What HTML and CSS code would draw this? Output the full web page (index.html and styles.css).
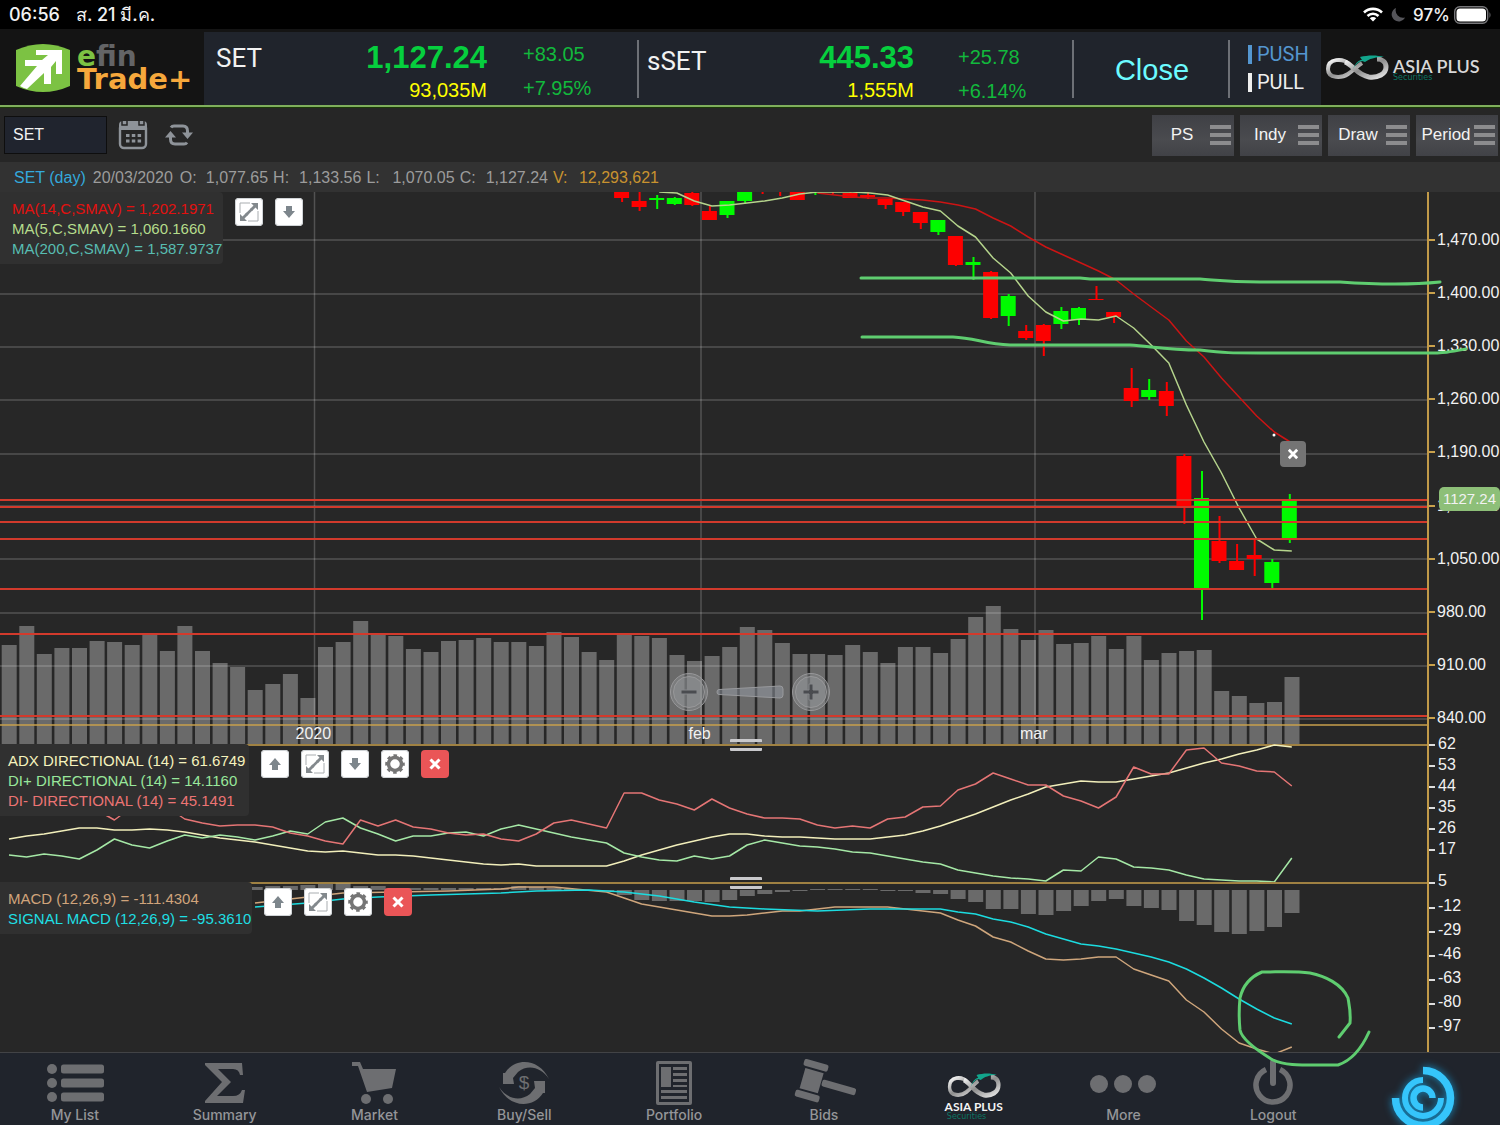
FILE: index.html
```html
<!DOCTYPE html>
<html lang="th">
<head>
<meta charset="utf-8">
<meta name="viewport" content="width=device-width, initial-scale=1">
<title>efin Trade+</title>
<link rel="stylesheet" href="styles.css">
</head>
<body>
<svg class="defs" aria-hidden="true">
  <defs>
    <linearGradient id="silver" x1="0" y1="0" x2="1" y2="1">
      <stop offset="0" stop-color="#fff"/><stop offset=".5" stop-color="#8d8d8d"/><stop offset="1" stop-color="#e8e8e8"/>
    </linearGradient>
    <symbol id="i-up" viewBox="0 0 28 28"><path fill="#7d868c" d="M14 8l6 7h-3v5h-6v-5H8z"/></symbol>
    <symbol id="i-down" viewBox="0 0 28 28"><path fill="#7d868c" d="M14 20l6-7h-3V8h-6v5H8z"/></symbol>
    <symbol id="i-expand" viewBox="0 0 28 28">
      <path fill="none" stroke="#a9adb0" d="M5 15V5h10M23 13v10H13"/>
      <path fill="#83898d" d="M16 5h7v7l-2.500-2.500-3.500 3.500-2-2 3.500-3.500zM12 23H5v-7l2.500 2.500 4-4 2 2-4 4z"/>
      <path stroke="#83898d" stroke-width="2.500" d="M11 17l6-6"/>
    </symbol>
    <symbol id="i-gear" viewBox="0 0 28 28">
      <circle cx="14" cy="14" r="6.500" fill="none" stroke="#757575" stroke-width="3.500"/>
      <circle cx="14" cy="14" r="8.600" fill="none" stroke="#757575" stroke-width="2.400" stroke-dasharray="3.600 3.154" stroke-dashoffset="1.800"/>
    </symbol>
    <symbol id="i-x" viewBox="0 0 28 28"><path stroke="#fff" stroke-width="3" d="M9.500 9.500l9 9M18.500 9.500l-9 9"/></symbol>
    <symbol id="i-infinity" viewBox="0 0 64 26">
      <path fill="none" stroke="url(#silver)" stroke-width="4" d="M24 9C18 3 3 3 3 14c0 10 14 9 20 5 6-4 9-8 14-11"/>
      <path fill="none" stroke="url(#silver)" stroke-width="5" d="M20 7c8 3 12 13 24 15 9 1 17-3 17-10 0-5-4-8-9-8"/>
      <path fill="#12a58c" d="M28 14c3-7 6-9 9-9l-2-3c8-2 17-2 24 0-9 0-15 2-19 5l-3-1c-4 1-7 4-9 8z"/>
    </symbol>
  </defs>
</svg>

<div class="app">
  <div class="status">
    <span>06:56</span><span>ส. 21 มี.ค.</span>
    <span class="status-right">
      <svg width="20" height="15" viewBox="0 0 20 15"><g fill="none" stroke="#fff" stroke-width="2.600"><path d="M1 5.500a13 13 0 0 1 18 0"/><path d="M4.500 9a8 8 0 0 1 11 0"/></g><path fill="#fff" d="M10 14.500l-3.200-3.200a4.500 4.500 0 0 1 6.400 0z"/></svg>
      <svg width="14" height="14" viewBox="0 0 14 14"><path fill="#55555a" d="M5 0A7 7 0 1 0 14 9.500 7.500 7.500 0 0 1 5 0z"/></svg>
      <span class="battery-level">97%</span>
      <svg width="38" height="18" viewBox="0 0 38 18"><rect x=".7" y=".7" width="33" height="16.600" rx="5" fill="none" stroke="#77777a" stroke-width="1.400"/><rect x="2.500" y="2.500" width="29.500" height="13" rx="3.500" fill="#fff"/><path fill="#77777a" d="M35.500 6q2 3 0 6z"/></svg>
    </span>
  </div>

  <header class="header">
    <a class="brand" href="#">
      <svg width="54" height="48" viewBox="0 0 54 48"><path fill="#7cc243" d="M0 6Q27-6 54 6v36q-27 12-54 0z"/><path fill="#fff" d="M20 6h26v24h-6V17l-5 6v17h-7V29L11 45q-4-1-7-3l17-20H9v-6h17l6-5H20z"/></svg>
      <span class="brand-text"><span class="brand-top"><b>e</b>fin</span><span class="brand-bottom">Trade+</span></span>
    </a>
    <div class="stats">
      <section class="index">
        <h2 class="index-name">SET</h2>
        <p class="index-value"><strong>1,127.24</strong><span>93,035M</span></p>
        <p class="index-change"><span>+83.05</span><span>+7.95%</span></p>
      </section>
      <section class="index index-second">
        <h2 class="index-name">sSET</h2>
        <p class="index-value"><strong>445.33</strong><span>1,555M</span></p>
        <p class="index-change"><span>+25.78</span><span>+6.14%</span></p>
      </section>
      <div class="market">Close</div>
      <div class="mode"><button class="push" type="button">PUSH</button><button class="pull" type="button">PULL</button></div>
    </div>
    <a class="sponsor" href="#">
      <svg width="64" height="26"><use href="#i-infinity"/></svg>
      <span class="sponsor-text"><b>ASIA PLUS</b><small>Securities</small></span>
    </a>
  </header>

  <form class="toolbar">
    <input class="symbol" type="text" value="SET" aria-label="Symbol">
    <button class="tool" type="button" aria-label="Calendar">
      <svg width="30" height="30" viewBox="0 0 30 30"><rect x="2" y="4" width="26" height="24" rx="4" fill="none" stroke="#8e9399" stroke-width="2.400"/><path fill="#8e9399" d="M1 10V5q0-4 4-4v3h4V1h12v3h4V1q4 0 4 4v5z"/><path stroke="#262626" stroke-width="1.500" d="M4 1v4h5V1M21 1v4h5V1" fill="#8e9399"/><path stroke="#8e9399" stroke-width="3" stroke-dasharray="3.500 2.300" d="M8 15.500h16M8 21h16"/></svg>
    </button>
    <button class="tool" type="button" aria-label="Refresh">
      <svg width="28" height="22" viewBox="0 0 28 22"><g fill="none" stroke="#8e9399" stroke-width="3"><path d="M6 3.500Q7 2 9 2h9q4.500 0 4.500 5v2"/><path d="M22 18.500Q21 20 19 20h-9q-4.500 0-4.500-5v-2"/></g><path fill="#8e9399" d="M17 8.500h11L22.500 15zM11 13.500H0L5.500 7z"/></svg>
    </button>
    <div class="menus">
      <button class="menu" type="button"><span>PS</span><i></i></button>
      <button class="menu" type="button"><span>Indy</span><i></i></button>
      <button class="menu" type="button"><span>Draw</span><i></i></button>
      <button class="menu" type="button"><span>Period</span><i></i></button>
    </div>
  </form>

  <dl class="quote">
    <dt class="quote-symbol">SET (day)</dt><dd class="quote-date">20/03/2020</dd>
    <dt>O:</dt><dd>1,077.65</dd>
    <dt>H:</dt><dd>1,133.56</dd>
    <dt>L:</dt><dd>1,070.05</dd>
    <dt>C:</dt><dd>1,127.24</dd>
    <dt class="gold">V:</dt><dd class="gold">12,293,621</dd>
  </dl>

  <main class="charts">
    <section class="panel" aria-label="Price">
      <svg class="plot" id="price" viewBox="0 192 1427 552" preserveAspectRatio="none"></svg>
      <ol class="axis axis-price">
        <li>1,470.00</li><li>1,400.00</li><li>1,330.00</li><li>1,260.00</li><li>1,190.00</li><li>1,120.00</li><li>1,050.00</li><li>980.00</li><li>910.00</li><li>840.00</li>
      </ol>
      <div class="overlay">
        <ul class="legend legend-ma"><li class="red">MA(14,C,SMAV) = 1,202.1971</li><li class="lime">MA(5,C,SMAV) = 1,060.1660</li><li class="teal">MA(200,C,SMAV) = 1,587.9737</li></ul>
        <div class="actions">
          <button type="button" aria-label="Expand"><svg><use href="#i-expand"/></svg></button>
          <button type="button" aria-label="Move down"><svg><use href="#i-down"/></svg></button>
        </div>
      </div>
      <span class="date date-year">2020</span><span class="date date-feb">feb</span><span class="date date-mar">mar</span>
      <button class="dismiss" type="button" aria-label="Remove line"><svg><use href="#i-x"/></svg></button>
      <output class="price-tag">1127.24</output>
      <div class="zoom">
        <button type="button" aria-label="Zoom out"><svg viewBox="0 0 40 40"><circle cx="20" cy="20" r="18.500"/><circle cx="20" cy="20" r="15.500"/><path d="M12 18h16v4H12z"/></svg></button>
        <svg class="wedge" viewBox="0 0 68 14"><path d="M3 4.500L64 1q3 0 3 3v6q0 3-3 3L3 9.500q-2 0-2-2.500t2-2.500z"/></svg>
        <button type="button" aria-label="Zoom in"><svg viewBox="0 0 40 40"><circle cx="20" cy="20" r="18.500"/><circle cx="20" cy="20" r="15.500"/><path d="M18 12h4v6h6v4h-6v6h-4v-6h-6v-4h6z"/></svg></button>
      </div>
    </section>

    <section class="panel" aria-label="ADX">
      <svg class="plot" id="adx" viewBox="0 744 1427 138" preserveAspectRatio="none"></svg>
      <ol class="axis axis-adx"><li>62</li><li>53</li><li>44</li><li>35</li><li>26</li><li>17</li><li>5</li></ol>
      <div class="overlay">
        <ul class="legend legend-adx"><li class="cream">ADX DIRECTIONAL (14) = 61.6749</li><li class="mint">DI+ DIRECTIONAL (14) = 14.1160</li><li class="salmon">DI- DIRECTIONAL (14) = 45.1491</li></ul>
        <div class="actions">
          <button type="button" aria-label="Move up"><svg><use href="#i-up"/></svg></button>
          <button type="button" aria-label="Expand"><svg><use href="#i-expand"/></svg></button>
          <button type="button" aria-label="Move down"><svg><use href="#i-down"/></svg></button>
          <button type="button" aria-label="Settings"><svg><use href="#i-gear"/></svg></button>
          <button class="remove" type="button" aria-label="Remove"><svg><use href="#i-x"/></svg></button>
        </div>
      </div>
      <span class="grip"></span>
    </section>

    <section class="panel" aria-label="MACD">
      <svg class="plot" id="macd" viewBox="0 882 1427 170" preserveAspectRatio="none"></svg>
      <ol class="axis axis-macd"><li>-12</li><li>-29</li><li>-46</li><li>-63</li><li>-80</li><li>-97</li></ol>
      <div class="overlay">
        <ul class="legend legend-macd"><li class="tan">MACD (12,26,9) = -111.4304</li><li class="cyan">SIGNAL MACD (12,26,9) = -95.3610</li></ul>
        <div class="actions">
          <button type="button" aria-label="Move up"><svg><use href="#i-up"/></svg></button>
          <button type="button" aria-label="Expand"><svg><use href="#i-expand"/></svg></button>
          <button type="button" aria-label="Settings"><svg><use href="#i-gear"/></svg></button>
          <button class="remove" type="button" aria-label="Remove"><svg><use href="#i-x"/></svg></button>
        </div>
      </div>
      <span class="grip"></span>
    </section>
  </main>

  <nav class="nav">
    <a href="#"><svg width="58" height="44" viewBox="0 0 58 44"><circle cx="6" cy="8" r="5"/><circle cx="6" cy="22" r="5"/><circle cx="6" cy="36" r="5"/><rect x="15" y="3.500" width="43" height="9" rx="2.500"/><rect x="15" y="17.500" width="43" height="9" rx="2.500"/><rect x="15" y="31.500" width="43" height="9" rx="2.500"/></svg><span>My List</span></a>
    <a href="#"><svg width="42" height="44" viewBox="0 0 42 44"><path d="M1 2h37l1 12h-3q-1-6-7-6H14l13 13-14 14h16q7 0 9-6h3l-2 13H1v-2l17-19L1 4z"/></svg><span>Summary</span></a>
    <a href="#"><svg width="44" height="44" viewBox="0 0 44 44"><path d="M0 1h8l3 7h33l-4 19-25 4L6 5H0z"/><circle cx="14" cy="38" r="5"/><circle cx="36" cy="38" r="5"/></svg><span>Market</span></a>
    <a href="#"><svg width="50" height="44" viewBox="0 0 50 44"><path d="M4 12h2C16-4 40-3 50 18 42 6 29 3 19 11l-5 6 1 6H4zM46 32h-2C34 48 10 47 0 26c8 12 21 15 31 7l5-6-1-7h11z"/><text x="25" y="28" text-anchor="middle" class="dollar">$</text></svg><span>Buy/Sell</span></a>
    <a href="#"><svg width="36" height="44" viewBox="0 0 36 44"><path fill-rule="evenodd" d="M2 0h32q2 0 2 2v40q0 2-2 2H2q-2 0-2-2V2q0-2 2-2zm1 3v38h30V3z"/><path d="M5 6h10v20H5zM17 6h14v3H17zM17 12h14v3H17zM17 18h14v3H17zM17 24h14v2H17zM5 29h26v3H5zM5 35h26v3H5z"/></svg><span>Portfolio</span></a>
    <a href="#"><svg width="62" height="44" viewBox="0 0 62 44"><g transform="rotate(16 18 20)"><rect x="6" y="0" width="25" height="7" rx="2"/><rect x="9" y="9" width="19" height="21"/><rect x="6" y="32" width="25" height="7" rx="2"/><rect x="29" y="15" width="35" height="7" rx="2"/></g></svg><span>Bids</span></a>
    <a class="nav-sponsor" href="#"><svg width="54" height="30" viewBox="0 0 64 30" preserveAspectRatio="none"><use href="#i-infinity" width="64" height="30"/></svg><b>ASIA PLUS</b><small>Securities</small></a>
    <a href="#"><svg width="66" height="44" viewBox="0 0 66 44"><circle cx="9" cy="23" r="9"/><circle cx="33" cy="23" r="9"/><circle cx="57" cy="23" r="9"/></svg><span>More</span></a>
    <a href="#"><svg width="40" height="44" viewBox="0 0 40 44"><path fill="none" stroke="#6d6e71" stroke-width="5.500" d="M13 8.500a17 17 0 1 0 14 0"/><rect x="17" y="-2" width="6" height="27" rx="3"/></svg><span>Logout</span></a>
    <a class="assist" href="#" aria-label="Assistant"><svg width="70" height="70" viewBox="-35 -35 70 70"><g fill="none" stroke="#35c5fb"><path stroke-width="7.500" d="M0-27.500A27.500 27.500 0 1 1-27.500 0"/><path stroke-width="6" d="M0-18A18 18 0 1 0 18 0"/><path stroke-width="6.500" d="M9.500 0A9.500 9.500 0 1 0 0 9.500"/></g></svg></a>
  </nav>

  <svg class="ink" viewBox="0 0 1500 1125" preserveAspectRatio="none" aria-hidden="true">
    <path d="M861 278H1080L1090 279H1200C1225 281 1230 282 1260 282H1340C1370 284 1410 285 1440 282"/>
    <path d="M862 337H953C975 338 985 344 1010 345H1130C1150 346 1165 350 1200 350 1225 353 1230 353 1260 353H1425C1445 353 1450 352 1466 349"/>
    <path d="M1339 1037L1350 1023C1351 1012 1349 1004 1348 998 1342 984 1325 976 1310 973 1295 971 1280 972 1262 972 1250 977 1243 985 1240 998 1239 1008 1239 1020 1240 1030 1242 1040 1258 1051 1273 1060 1286 1066 1300 1065 1338 1065 1350 1061 1360 1052 1369 1032"/>
  </svg>
</div>
<script src="chart.js"></script>
</body>
</html>
```

FILE: styles.css
```css
* { box-sizing: border-box; }
body { margin: 0; background: #272727; color: #f2f2f2; font: 16px/20px "Liberation Sans", Arial, sans-serif; }
h2, p, ol, ul, dl, dd { margin: 0; padding: 0; font-weight: normal; list-style: none; }
a { color: inherit; text-decoration: none; }
button, input { font: inherit; color: inherit; border: 0; padding: 0; background: none; border-radius: 0; }
.defs { position: absolute; width: 0; height: 0; }

.app { position: relative; display: flex; flex-direction: column; min-height: 100vh; overflow: hidden; }

.status { display: flex; align-items: center; gap: 16px; height: 29px; padding: 0 8px 0 9px; background: #000; font: 500 18px/28px Inter, "Noto Sans", sans-serif; }
.status-right { display: flex; align-items: center; gap: 8px; margin-left: auto; }
.battery-level { margin-right: -4px; font-size: 17px; }

.header { display: flex; height: 79px; padding-top: 3px; background: #141414; border-bottom: 1px solid #1b3a08; box-shadow: inset 0 -2px #7fae5c; }
.brand { display: flex; align-items: center; gap: 7px; width: 204px; padding: 0 0 4px 16px; }
.brand-text { display: flex; flex-direction: column; font: 700 28px/22px "DejaVu Sans", sans-serif; }
.brand-top { color: #636466; }
.brand-top b { color: #7cc243; }
.brand-bottom { color: #f6a83c; font-size: 29px; }

.stats { flex: 1; display: grid; grid-template-columns: 435fr 435fr 156fr 91fr; margin-bottom: 2px; background: #20242c; }
.index { display: grid; grid-template-columns: 1fr auto 116px; column-gap: 36px; padding-left: 12px; }
.index-second { column-gap: 44px; padding-left: 8px; }
.index-name { padding-top: 12px; font: 400 26px/28px Roboto, sans-serif; }
.index-second .index-name { padding-top: 15px; }
.index-value, .index-change { display: flex; flex-direction: column; }
.index-value { align-items: flex-end; padding-top: 8px; }
.index-value strong { color: #06cf3e; font-size: 31px; line-height: 36px; }
.index-value span { color: #ff0; font-size: 20px; line-height: 28px; }
.index-change { padding-top: 5px; color: #12b93c; font-size: 20px; line-height: 34px; }
.index-second .index-change { padding-top: 8px; }
.index, .market { background: linear-gradient(#6d7076, #6d7076) right 8px / 2px 58px no-repeat; }
.market { display: grid; place-items: center; color: #6cfbff; font-size: 29px; }
.mode { display: flex; flex-direction: column; align-items: flex-start; gap: 9px; padding: 13px 0 0 18px; }
.mode button { height: 19px; padding-left: 5px; border-left: 4px solid; font: 20px/19px Roboto, sans-serif; }
.push { color: #5496d0; }
.pull { color: #eee; }

.sponsor { display: flex; align-items: center; gap: 4px; width: 179px; padding: 0 0 4px 4px; }
.sponsor-text { display: flex; flex-direction: column; padding-top: 5px; }
.sponsor b { color: #d8d8d8; font: 600 18px/16px Lato, sans-serif; }
.sponsor small, .nav-sponsor small { color: #0c7563; font: 8px/8px "DejaVu Sans", sans-serif; }

.toolbar { display: flex; align-items: center; height: 54px; padding: 0 2px 0 4px; background: #262626; }
.symbol { width: 103px; height: 38px; padding-left: 8px; border: 1px solid #0e0e0e; background: #20242e; }
.tool { display: grid; place-items: center; width: 46px; height: 38px; margin-left: 3px; }
.tool + .tool { margin-left: 0; }
.menus { display: flex; gap: 6px; margin-left: auto; }
.menu { display: flex; align-items: center; width: 82px; height: 41px; padding: 0 3px 0 2px; background: linear-gradient(#3f4045, #4a4b4f 60%, #414247); font-size: 17px; }
.menu span { flex: 1; text-align: center; margin: 0 -3px; }
.menu i { width: 21px; height: 20px; background: linear-gradient(#8c8c8e 0 4px, transparent 4px 8px, #8c8c8e 8px 12px, transparent 12px 16px, #8c8c8e 16px); }

.quote { display: flex; height: 30px; padding: 1px 14px 0; background: #323232; color: #9c9c9c; line-height: 30px; }
.quote dt { width: 26px; }
.quote dd { margin-right: 5px; }
.quote dt.quote-symbol { width: auto; margin-right: 7px; color: #34a9dc; }
.quote dd.quote-date { margin-right: 7px; }
.quote .gold { color: #c8922f; }

.charts { flex: 1; display: grid; grid-template-rows: minmax(0, 552fr) minmax(0, 138fr) minmax(0, 170fr); min-height: 800px; }
.panel { position: relative; display: grid; grid-template: minmax(0, 1fr) / 1fr 73px; min-height: 0; }
.plot, .axis { contain: size; }
.plot { display: block; width: 100%; height: 100%; overflow: hidden; }
.plot * { vector-effect: non-scaling-stroke; }
.axis { display: grid; border-left: 2px solid #c19a49; }
.axis li { display: flex; align-items: center; gap: 2px; }
.axis li::before { content: ""; width: 6px; height: 2px; background: #c9a14c; }
.axis-price { padding-top: 21px; margin-bottom: -1px; }
.axis-adx { grid-template-rows: repeat(6, 21px) minmax(0, 1fr); padding-top: 1px; }
.axis-adx li, .axis-macd li { position: relative; top: -12px; gap: 3px; }
.axis-adx li::before, .axis-macd li::before { background: #ddd; margin-top: 3px; }
.axis-adx li:last-child { align-self: end; top: 9px; }
.axis-macd { grid-auto-rows: 24px; align-content: start; padding-top: 12px; }
.axis-macd li { top: 0; }

.overlay { position: absolute; top: 0; left: 0; display: flex; align-items: flex-start; gap: 12px; }
.legend { padding: 7px 0 5px 8px; background: #303030; border-radius: 0 4px 4px 0; font-size: 15px; line-height: 20px; white-space: nowrap; }
.legend-ma { width: 223px; padding-left: 12px; }
.legend-adx { width: 249px; }
.legend-macd { width: 252px; }
.actions { display: flex; gap: 12px; padding-top: 6px; }
.actions button { width: 28px; height: 28px; border-radius: 4px; background: #fff; box-shadow: inset 0 0 0 1px #cfd3d6; }
.actions .remove { background: #ea5557; box-shadow: none; }
.actions svg, .dismiss svg { display: block; width: 28px; height: 28px; }
.red { color: #e3100f; }
.lime { color: #b5dc8c; }
.teal { color: #58bdb2; }
.cream { color: #f5f2bd; }
.mint { color: #98e79b; }
.salmon { color: #ec7474; }
.tan { color: #d0a47b; }
.cyan { color: #1fdfe3; }

.date { position: absolute; bottom: 0; }
.date-year { left: 19.7%; }
.date-feb { left: 45.9%; }
.date-mar { left: 68%; }
.dismiss { position: absolute; left: 85.3%; top: 45.1%; width: 26px; height: 26px; border-radius: 4px; background: #747474; overflow: hidden; }
.dismiss svg { width: 26px; height: 26px; }
.price-tag { position: absolute; right: 0; top: 53.4%; width: 61px; height: 24px; border-radius: 5px; background: #8dbf78; font-size: 15px; line-height: 24px; text-align: center; }
.zoom { position: absolute; left: 0; right: 0; bottom: 32px; display: flex; justify-content: center; align-items: center; gap: 7px; pointer-events: none; }
.zoom button { width: 40px; height: 40px; }
.zoom button svg { display: block; width: 40px; height: 40px; }
.zoom circle { fill: rgba(150, 152, 156, .4); stroke: #98989a; stroke-width: 1; }
.zoom button path { fill: #4a4c50; stroke: #85878a; }
.wedge { width: 68px; height: 14px; }
.wedge path { fill: rgba(150, 155, 165, .5); stroke: #98999c; }
.grip { position: absolute; left: 50%; top: -5px; width: 32px; height: 12px; margin-left: -20px; border: solid #c9c9cc; border-width: 3px 0; border-radius: 1px; }

.nav { display: grid; grid-template-columns: repeat(10, 1fr); height: 73px; padding-right: 2px; border-top: 1px solid #424346; background: #20242c; color: #949598; font: 500 14px/18px Inter, sans-serif; }
.nav a { display: flex; flex-direction: column; align-items: center; gap: 1px; padding-top: 8px; }
.nav svg { fill: #6d6e71; flex: none; overflow: visible; }
.nav .dollar { font: 19px "Liberation Sans", sans-serif; }
.nav a.nav-sponsor { padding-top: 18px; gap: 0; color: #f4f4f4; }
.nav-sponsor b { font: 700 12px/12px Lato, sans-serif; }
.nav-sponsor small { align-self: flex-start; margin-left: 48px; }
.nav a.assist { padding-top: 10px; }
.assist svg { filter: drop-shadow(0 0 4px #168ec4); }

.ink { position: absolute; inset: 0; width: 100%; height: 100%; pointer-events: none; fill: none; stroke: #5fcd70; stroke-width: 3; stroke-linecap: round; stroke-linejoin: round; }

.grid-line { stroke: rgba(255, 255, 255, .2); stroke-width: 1.5; }
.level { stroke: #d23a2c; stroke-width: 2; }
.rule { stroke: #c9a14c; stroke-width: 1.5; }
.volume { fill: #6a6a6a; }
.up { fill: #00fb00; stroke: none; }
.down { fill: #fd0000; stroke: none; }
.line { fill: none; stroke-width: 1.5; stroke-linejoin: round; }
.ma14 { stroke: #cc1414; }
.ma5 { stroke: #b5d48c; }
.adx { stroke: #f2efbb; }
.plus { stroke: #a5e8a6; }
.minus { stroke: #e57575; }
.macd { stroke: #cfa67c; }
.signal { stroke: #1cdce0; }
```

FILE: chart.js
```js
const STEP = 17.573;
const centre = i => 9 + i * STEP;
const rect = (cls, x, y, w, h) => `<rect class="${cls}" x="${x.toFixed(1)}" y="${y}" width="${w}" height="${h}"/>`;
const hline = (cls, y) => `<path class="${cls}" d="M0 ${y}H1427"/>`;
const vline = (cls, x) => `<path class="${cls}" d="M${x} 192V724"/>`;
const series = (cls, first, ys) =>
  `<polyline class="line ${cls}" points="${ys.map((y, k) => centre(first + k).toFixed(1) + ',' + y).join(' ')}"/>`;
const pairs = (cls, pts) =>
  `<polyline class="line ${cls}" points="${pts.map(([i, y]) => centre(i).toFixed(1) + ',' + y).join(' ')}"/>`;

const volume = [645,626,654,648,648,641,642,645,634,651,626,651,663,667,690,684,674,698,647,642,621,634,636,649,652,641,640,638,642,
  642,646,632,637,652,660,635,636,638,655,661,656,647,627,630,643,654,654,655,645,652,663,647,647,653,639,617,606,
  629,640,630,644,643,636,649,636,660,653,651,650,691,696,703,702,677];

// index, direction, body top, body bottom, wick top, wick bottom
const candles = [
  [35,'down',190,198,190,202],[36,'down',201,207,190,211],[37,'up',198,200,195,209],[38,'up',198,204,197,205],
  [39,'down',193,205,190,206],[40,'down',211,220,206,220],[41,'up',201,215,201,218],[42,'up',190,201,190,204],
  [43,'down',190,191,190,194],[44,'down',190,191,190,196],[45,'down',190,200,190,200],[46,'up',190,191,190,195],
  [47,'down',190,191,190,194],[48,'down',193,198,190,198],[49,'down',195,197,190,199],[50,'down',199,205,199,209],
  [51,'down',202,212,202,216],[52,'down',212,223,212,229],[53,'up',220,232,220,235],[54,'down',236,265,236,266],
  [55,'up',262,265,257,280],[56,'down',272,318,271,319],[57,'up',296,316,294,326],[58,'down',331,338,325,340],
  [59,'down',325,341,324,356],[60,'up',311,324,307,329],[61,'up',308,320,307,325],[62,'down',299,300,286,300],
  [63,'down',312,317,312,323],[64,'down',388,401,368,407],[65,'up',390,397,379,400],[66,'down',391,406,382,416],
  [67,'down',456,506,454,524],[68,'up',498,590,471,620],[69,'down',541,561,516,563],[70,'down',561,570,544,570],
  [71,'down',555,559,539,576],[72,'up',562,583,559,588],[73,'up',500,538,494,543]];

const ma5 = [192,193,201,206,205,203,201,198,194,192,192,192,193,195,201,207,211,226,237,258,273,296,312,321,319,320,316,328,345,363,
  405,442,473,508,539,550,551];
const ma14 = [193,195,197,198,198,199,200,202,205,209,218,226,237,247,255,263,271,280,294,307,320,341,357,378,397,416,432,443];

const adx = [839,836,834,831,828,828,830,830,829,830,832,835,838,840,842,845,848,851,852,851,853,855,855,856,858,860,862,864,865,
  864,866,866,866,866,866,861,855,850,845,841,837,834,834,836,837,837,838,839,839,839,837,835,831,826,820,814,807,800,794,787,
  784,781,782,782,779,776,773,768,763,759,754,750,745,747];
const plus = [855,857,854,856,859,850,839,845,848,841,835,838,835,837,840,836,831,834,822,818,828,834,841,836,836,833,832,836,829,
  825,829,833,837,840,843,853,857,860,861,856,859,856,845,840,843,846,847,849,852,853,856,859,862,864,870,873,876,878,879,881,
  870,871,857,859,867,868,870,875,879,880,881,881,882,858];
const minus = [810,820,807,800,807,819,823,826,825,825,827,833,836,841,844,820,826,820,827,829,833,835,834,839,841,834,823,820,824,
  828,793,793,800,804,810,799,808,814,818,818,819,825,828,826,828,819,817,807,806,790,784,773,779,785,785,796,801,808,797,767,
  774,774,750,748,763,766,771,772,786];

const histogram = [887,886,886,885,884,883,886,886,888,888,888,888,888,888,888,886,887,888,889,890,891,895,900,901,901,901,902,900,896,
  894,892,891,889,889,889,889,890,891,893,894,899,902,909,909,914,915,911,906,901,899,906,908,910,921,925,932,934,931,927,913];
const macd = [[14,903],[16,899],[19,893],[22,892],[25,891],[28,889],[29,887],[31,887],[34,892],[35,898],[36,904],[37,907],[38,910],
  [39,913],[40,916],[41,916],[42,915],[43,913],[44,911],[45,911],[46,909],[47,907],[49,907],[50,907],[51,909],[52,911],[53,913],
  [54,920],[55,926],[56,937],[57,942],[58,951],[59,959],[60,960],[61,959],[62,957],[63,957],[64,969],[65,975],[66,981],[67,1000],
  [68,1012],[69,1029],[70,1043],[71,1049],[72,1054],[73,1047]];
const signal = [[14,907],[17,903],[19,899],[21,897],[24,895],[28,893],[30,891],[33,890],[35,892],[37,896],[39,902],[41,907],[43,909],
  [46,911],[49,909],[53,909],[54,912],[55,914],[56,919],[57,922],[58,927],[59,934],[60,939],[61,944],[62,946],[63,949],[64,953],
  [65,957],[66,962],[67,969],[68,978],[69,988],[70,999],[71,1009],[72,1018],[73,1024]];

document.getElementById('price').innerHTML = [
  volume.map((y, i) => rect('volume', centre(i) - 7.3, y, 15, 744 - y)).join(''),
  [240, 294, 347, 400, 454, 506, 559, 613, 666, 719].map(y => hline('grid-line', y)).join(''),
  [314.5, 701, 1035].map(x => vline('grid-line', x)).join(''),
  candles.map(([i, dir, top, bottom, high, low]) =>
    rect(dir, centre(i) - 10, top, 15, bottom - top) + rect(dir, centre(i) - 3, high, 2, low - high)).join(''),
  series('ma14', 46, ma14),
  series('ma5', 37, ma5),
  [500, 507, 522, 539, 589, 634, 716].map(y => hline('level', y)).join(''),
  '<circle cx="1274" cy="435" r="1.500" fill="#fff"/>',
  hline('rule', 725)
].join('');

document.getElementById('adx').innerHTML =
  hline('rule', 745) + series('adx', 0, adx) + series('plus', 0, plus) + series('minus', 5, minus);

document.getElementById('macd').innerHTML =
  histogram.map((y, k) => rect('volume', centre(14 + k) - 7.3, Math.min(y, 890), 15, Math.max(1, Math.abs(y - 890)))).join('') +
  hline('rule', 883) + pairs('macd', macd) + pairs('signal', signal);
```
